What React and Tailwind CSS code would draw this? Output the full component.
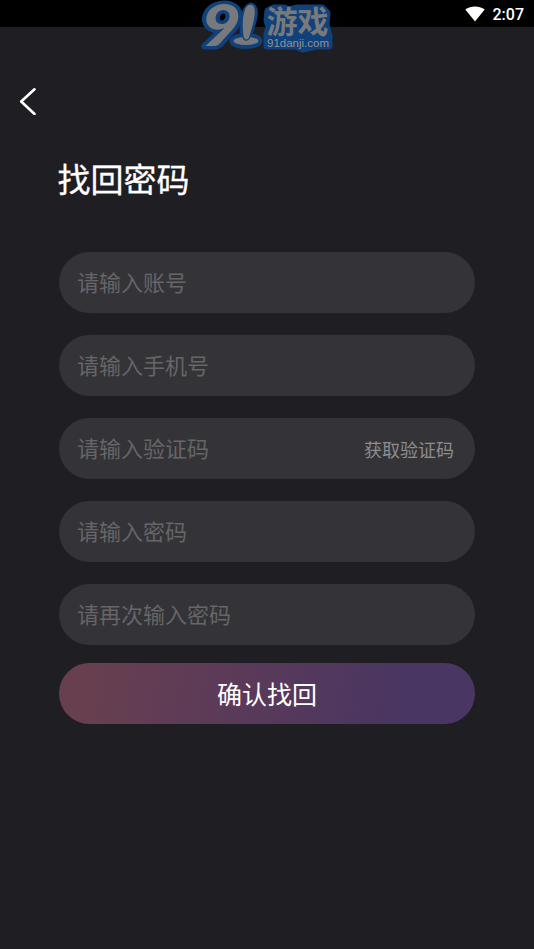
import React from "react";

const fields = [
  { name: "account", placeholder: "请输入账号" },
  { name: "phone", placeholder: "请输入手机号" },
  { name: "code", placeholder: "请输入验证码", action: "获取验证码" },
  { name: "password", placeholder: "请输入密码" },
  { name: "confirm", placeholder: "请再次输入密码" },
];

function Logo() {
  return (
    <svg
      viewBox="0 0 160 60"
      className="absolute left-[190px] top-0 h-[60px] w-[160px] overflow-visible"
    >
      {/* blue backing of the mark and the word */}
      <g fill="#10417a" stroke="#10417a" strokeWidth="7" strokeLinejoin="round">
        <path d="M61 6C66 8 65 16 61 28L57 38H54C52 27 53 9 61 6Z" />
        <ellipse cx="56" cy="41" rx="13" ry="4.5" />
        <path d="M78 11L84 8H94L98 10L108 8H132L137 13L136 24L139 36V46H126L113 49L105 46H77V34L79 27L77 20Z" />
      </g>
      <text
        x="11"
        y="46"
        fontSize="57"
        textLength="40"
        lengthAdjust="spacingAndGlyphs"
        fill="#78797c"
        stroke="#10417a"
        strokeWidth="7"
        strokeLinejoin="round"
        paintOrder="stroke"
        className="font-['Lato'] font-black italic"
      >
        9
      </text>
      <g fill="#78797c">
        <ellipse cx="56" cy="41" rx="12.5" ry="4" />
        <path
          d="M60 4C67 4 66.500 14 62.500 28L59.500 38C58 41 54 41 53 37C51 24 52 5 60 4Z"
          stroke="#10417a"
          strokeWidth="1.200"
        />
        <text x="76.500" y="32.500" fontSize="31" className="font-['Noto_Sans_CJK_SC'] font-bold">游戏</text>
        <text x="77" y="46.500" fontSize="11.500" textLength="62" fill="#929396" className="font-['Liberation_Sans']">91danji.com</text>
      </g>
    </svg>
  );
}

function StatusBar() {
  return (
    <div className="flex h-[27px] items-center justify-end gap-2 bg-black pr-[10px]">
      <svg viewBox="0 0 20 16" className="h-4 w-5" fill="#fff">
        <path d="M10 15.500L0.300 3.600C6 -0.700 14 -0.700 19.700 3.600Z" />
      </svg>
      <span className="pt-[2px] font-['Roboto'] text-base font-medium leading-none text-white">
        2:07
      </span>
    </div>
  );
}

function Field({ name, placeholder, action }) {
  return (
    <div className="flex h-[61px] items-center rounded-full bg-[#343337] pl-[18px] pr-[21px]">
      <input
        name={name}
        placeholder={placeholder}
        className="min-w-0 flex-1 bg-transparent pb-[2px] text-[22px] text-white outline-none placeholder:text-[#666568]"
      />
      {action && (
        <button type="button" className="text-lg text-[#8d8c8f]">
          {action}
        </button>
      )}
    </div>
  );
}

export default function App() {
  return (
    <div className="relative h-[949px] w-[534px] overflow-hidden bg-[#1f1e22] font-['Noto_Sans_CJK_SC',sans-serif]">
      <StatusBar />
      <Logo />
      <main className="flex flex-col">
        <button type="button" aria-label="back" className="ml-[19px] mt-[60px] h-7 w-[18px]">
          <svg viewBox="0 0 18 28" className="h-7 w-[18px]" fill="none" stroke="#fff" strokeWidth="2.600" strokeLinecap="round" strokeLinejoin="round">
            <path d="M15.500 2.300L2.200 14.500L15.500 27" />
          </svg>
        </button>
        <h1 className="ml-[57.500px] mt-[39px] text-[33px] font-normal leading-[48px] text-white [-webkit-text-stroke:0.3px_white]">
          找回密码
        </h1>
        <form className="mx-[59px] mt-[50px] flex flex-col">
          <div className="flex flex-col gap-[22px]">
            {fields.map((field) => (
              <Field key={field.name} {...field} />
            ))}
          </div>
          <button
            type="button"
            className="mt-[18px] h-[61px] rounded-full bg-[linear-gradient(100deg,#673f4f_8%,#5b3a59_42%,#493662_82%,#493662_100%)] text-[25px] text-white"
          >
            确认找回
          </button>
        </form>
      </main>
    </div>
  );
}
